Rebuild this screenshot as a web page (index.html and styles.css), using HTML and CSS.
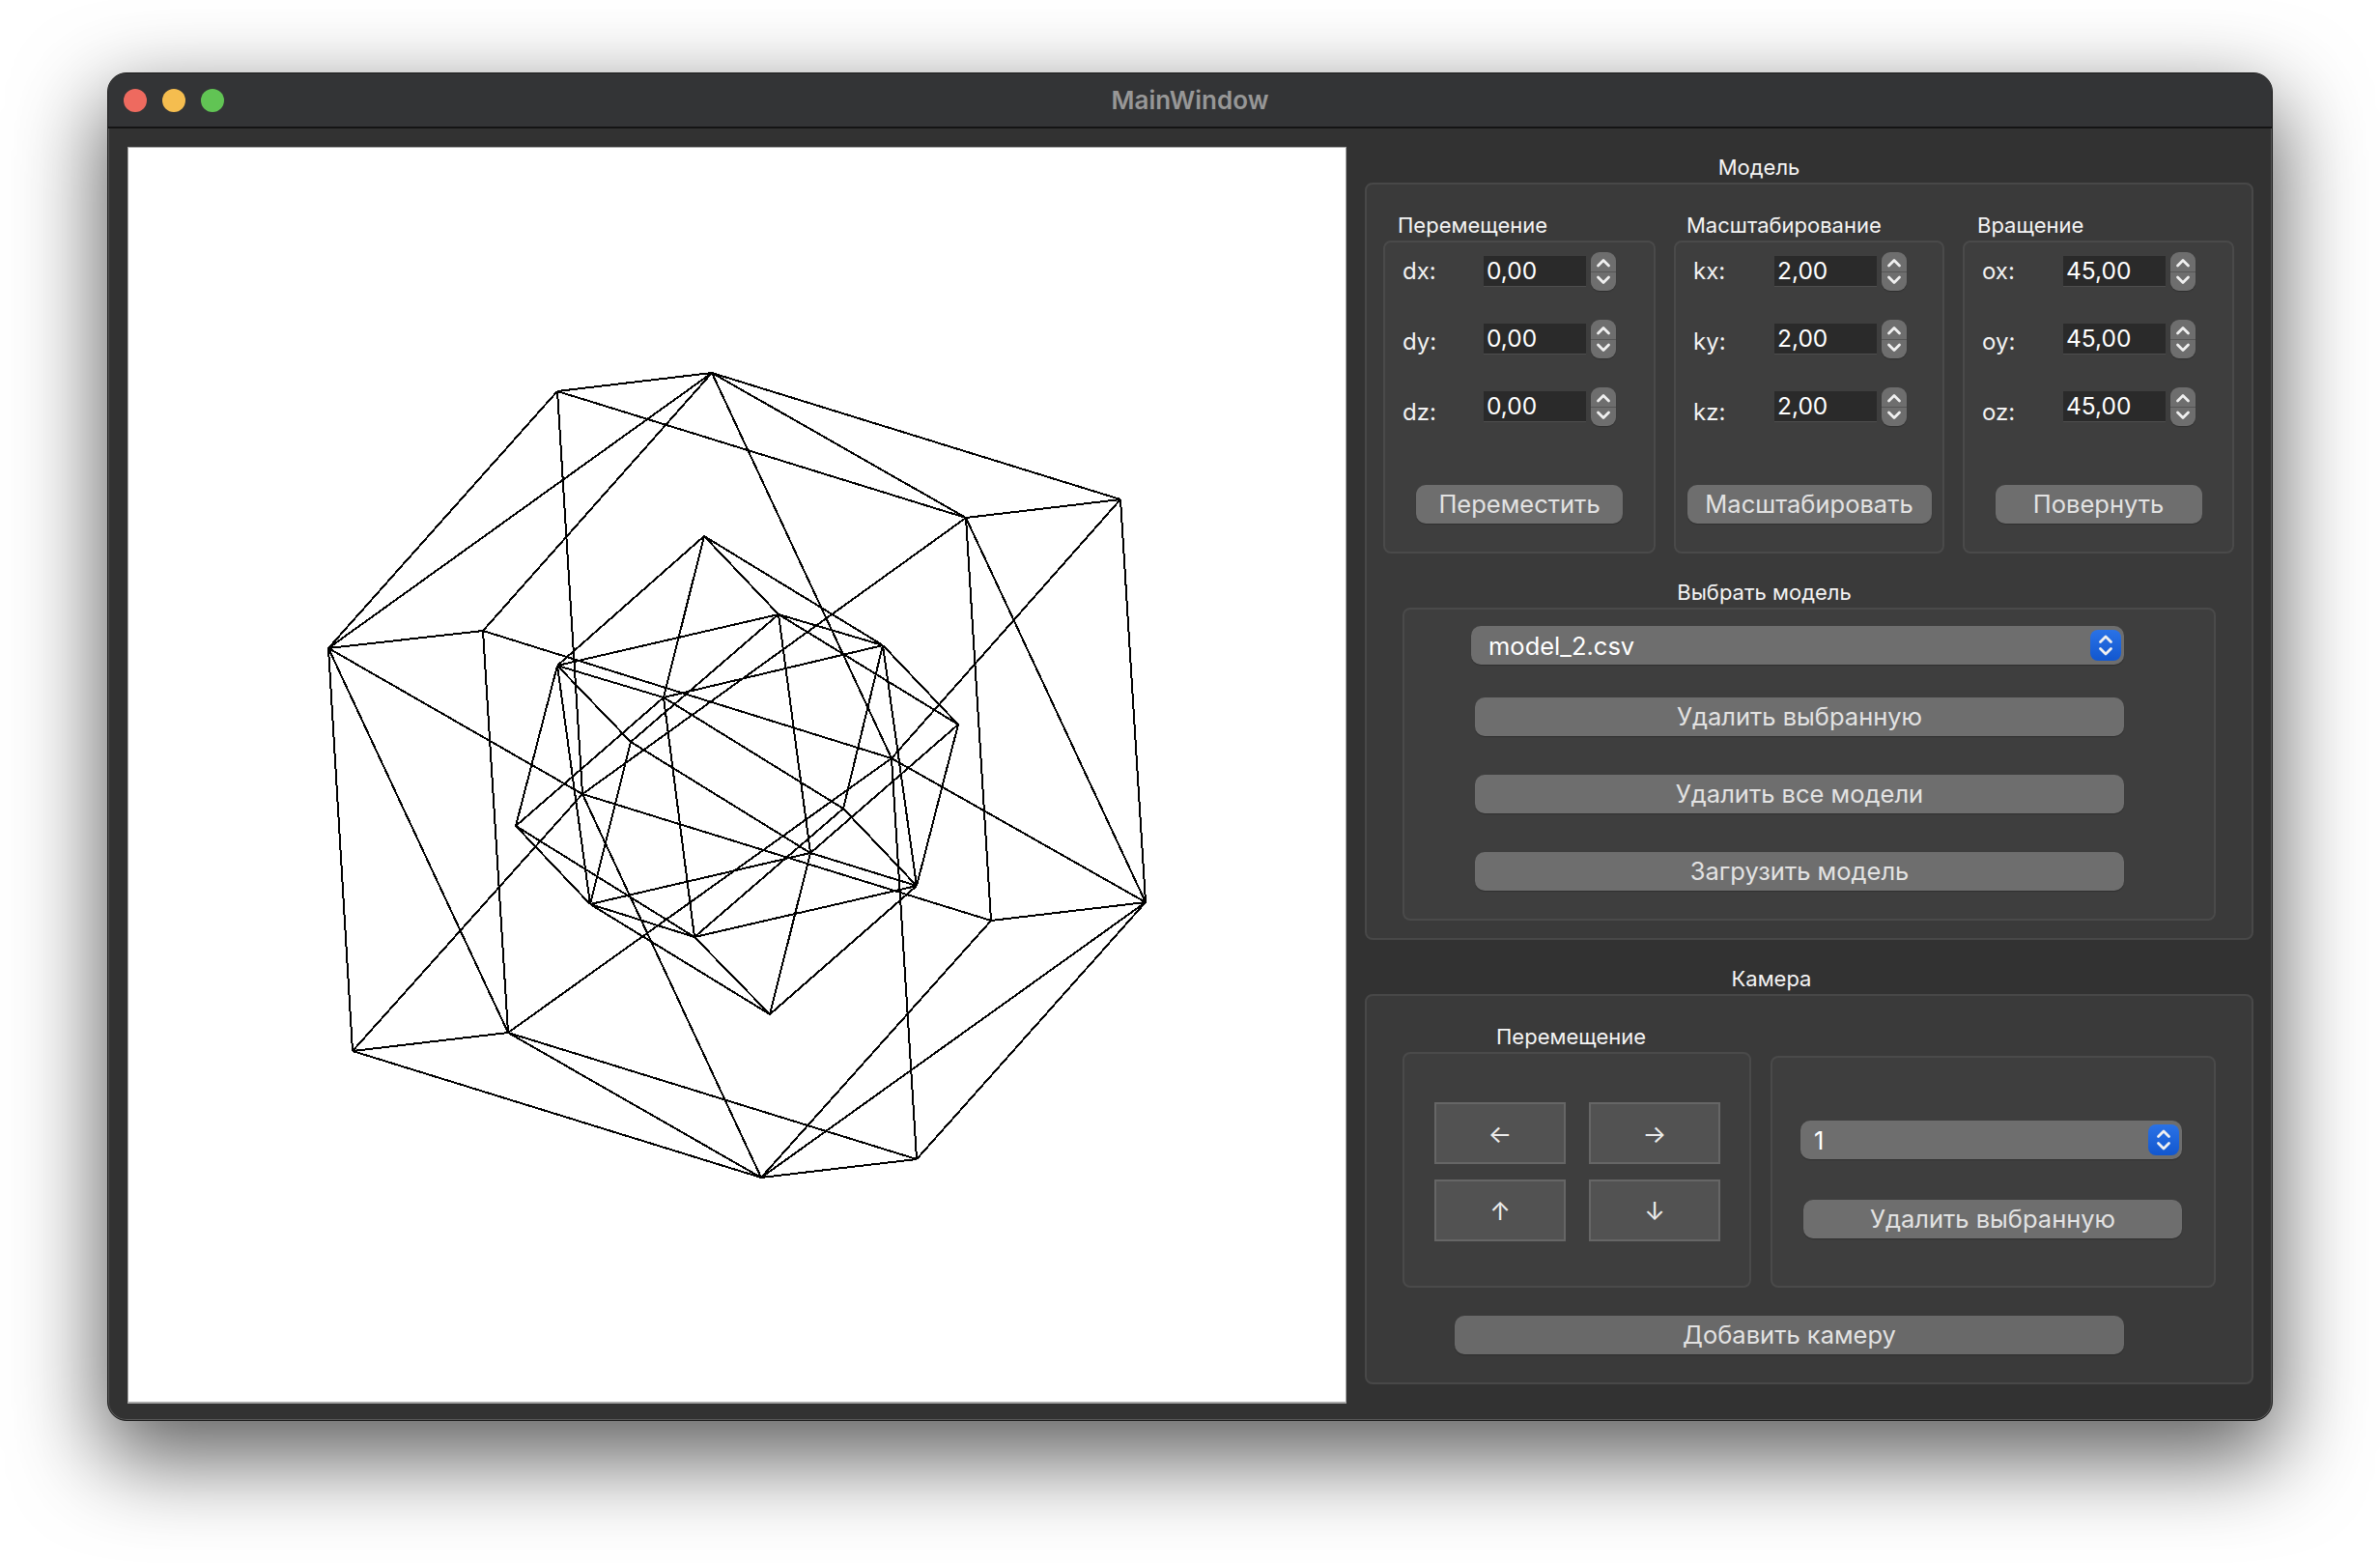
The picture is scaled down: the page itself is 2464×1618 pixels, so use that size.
FILE: index.html
```html
<!DOCTYPE html>
<html lang="ru">
<head>
    <meta charset="UTF-8">
    <title>MainWindow</title>
    <link rel="stylesheet" href="styles.css">
</head>
<body>

    <div class="window">

        <!-- Title bar -->
        <div class="titlebar">
            <div class="lights">
                <span class="light red"></span>
                <span class="light yellow"></span>
                <span class="light green"></span>
            </div>
            <div class="win-title">MainWindow</div>
        </div>

        <div class="main">

            <!-- Wireframe canvas -->
            <div class="canvas">
                <svg class="wire" viewBox="133 153 1260 1298">
                    <path d="M737 386L340 671M737 386L1000 536M737 386L923 785M340 671L526 1069M340 671L603 822M1000 536L1186 934M1000 536L603 822M526 1069L788 1219M526 1069L923 785M788 1219L1186 934M788 1219L603 822M1186 934L923 785
                             M577 405L737 386M577 405L340 671M577 405L1000 536M577 405L603 822
                             M500 653L737 386M500 653L340 671M500 653L526 1069M500 653L923 785
                             M1160 517L737 386M1160 517L1000 536M1160 517L1186 934M1160 517L923 785
                             M365 1088L340 671M365 1088L526 1069M365 1088L788 1219M365 1088L603 822
                             M949 1200L526 1069M949 1200L788 1219M949 1200L1186 934M949 1200L923 785
                             M1026 953L1000 536M1026 953L788 1219M1026 953L1186 934M1026 953L603 822"/>
                    <path d="M577 689L687 722M806 636L914 668M577 689L806 636M687 722L914 668M611 936L719 970M839 883L949 917M611 936L839 883M719 970L949 917M577 689L611 936M687 722L719 970M806 636L839 883M914 668L949 917
                             M729 555L577 689M729 555L687 722M729 555L806 636M729 555L914 668
                             M797 1050L611 936M797 1050L719 970M797 1050L839 883M797 1050L949 917
                             M992 750L806 636M992 750L914 668M992 750L839 883M992 750L949 917
                             M534 855L577 689M534 855L687 722M534 855L611 936M534 855L719 970
                             M873 837L687 722M873 837L914 668M873 837L719 970M873 837L949 917
                             M653 768L577 689M653 768L806 636M653 768L611 936M653 768L839 883"/>
                </svg>
            </div>

            <div class="side">

                <!-- Model -->
                <div class="group-title model-title">Модель</div>
                <div class="group">
                    <div class="transforms">

                        <div class="transform">
                            <div class="sub-title">Перемещение</div>
                            <div class="box">
                                <div class="form">
                                    <div class="labels">
                                        <span>dx:</span>
                                        <span>dy:</span>
                                        <span>dz:</span>
                                    </div>
                                    <div class="fields">
                                        <div class="field"><span class="input">0,00</span><span class="spin"><svg viewBox="0 0 26 40"><path d="M7.5 14L13 8.5L18.5 14M7.5 26L13 31.5L18.5 26"/></svg></span></div>
                                        <div class="field"><span class="input">0,00</span><span class="spin"><svg viewBox="0 0 26 40"><path d="M7.5 14L13 8.5L18.5 14M7.5 26L13 31.5L18.5 26"/></svg></span></div>
                                        <div class="field"><span class="input">0,00</span><span class="spin"><svg viewBox="0 0 26 40"><path d="M7.5 14L13 8.5L18.5 14M7.5 26L13 31.5L18.5 26"/></svg></span></div>
                                    </div>
                                </div>
                                <button class="btn apply">Переместить</button>
                            </div>
                        </div>

                        <div class="transform scale">
                            <div class="sub-title">Масштабирование</div>
                            <div class="box">
                                <div class="form">
                                    <div class="labels">
                                        <span>kx:</span>
                                        <span>ky:</span>
                                        <span>kz:</span>
                                    </div>
                                    <div class="fields">
                                        <div class="field"><span class="input">2,00</span><span class="spin"><svg viewBox="0 0 26 40"><path d="M7.5 14L13 8.5L18.5 14M7.5 26L13 31.5L18.5 26"/></svg></span></div>
                                        <div class="field"><span class="input">2,00</span><span class="spin"><svg viewBox="0 0 26 40"><path d="M7.5 14L13 8.5L18.5 14M7.5 26L13 31.5L18.5 26"/></svg></span></div>
                                        <div class="field"><span class="input">2,00</span><span class="spin"><svg viewBox="0 0 26 40"><path d="M7.5 14L13 8.5L18.5 14M7.5 26L13 31.5L18.5 26"/></svg></span></div>
                                    </div>
                                </div>
                                <button class="btn apply">Масштабировать</button>
                            </div>
                        </div>

                        <div class="transform">
                            <div class="sub-title">Вращение</div>
                            <div class="box">
                                <div class="form">
                                    <div class="labels">
                                        <span>ox:</span>
                                        <span>oy:</span>
                                        <span>oz:</span>
                                    </div>
                                    <div class="fields">
                                        <div class="field"><span class="input">45,00</span><span class="spin"><svg viewBox="0 0 26 40"><path d="M7.5 14L13 8.5L18.5 14M7.5 26L13 31.5L18.5 26"/></svg></span></div>
                                        <div class="field"><span class="input">45,00</span><span class="spin"><svg viewBox="0 0 26 40"><path d="M7.5 14L13 8.5L18.5 14M7.5 26L13 31.5L18.5 26"/></svg></span></div>
                                        <div class="field"><span class="input">45,00</span><span class="spin"><svg viewBox="0 0 26 40"><path d="M7.5 14L13 8.5L18.5 14M7.5 26L13 31.5L18.5 26"/></svg></span></div>
                                    </div>
                                </div>
                                <button class="btn apply">Повернуть</button>
                            </div>
                        </div>

                    </div>

                    <div class="group-title pick-title">Выбрать модель</div>
                    <div class="box pick">
                        <div class="combo">
                            <span>model_2.csv</span>
                            <span class="combo-arrows"><svg viewBox="0 0 32 32"><path d="M10.5 12.5L16 7L21.5 12.5M10.5 19.5L16 25L21.5 19.5"/></svg></span>
                        </div>
                        <button class="btn wide">Удалить выбранную</button>
                        <button class="btn wide">Удалить все модели</button>
                        <button class="btn wide">Загрузить модель</button>
                    </div>
                </div>

                <!-- Camera -->
                <div class="group-title camera-title">Камера</div>
                <div class="group camera">
                    <div class="camera-row">
                        <div class="camera-move">
                            <div class="sub-title">Перемещение</div>
                            <div class="box arrows-box">
                                <div class="arrows">
                                    <button class="arrow">←</button>
                                    <button class="arrow">→</button>
                                    <button class="arrow">↑</button>
                                    <button class="arrow">↓</button>
                                </div>
                            </div>
                        </div>
                        <div class="box camera-pick">
                            <div class="combo">
                                <span>1</span>
                                <span class="combo-arrows"><svg viewBox="0 0 32 32"><path d="M10.5 12.5L16 7L21.5 12.5M10.5 19.5L16 25L21.5 19.5"/></svg></span>
                            </div>
                            <button class="btn">Удалить выбранную</button>
                        </div>
                    </div>
                    <button class="btn add">Добавить камеру</button>
                </div>

            </div>
        </div>
    </div>

</body>
</html>
```

FILE: styles.css
```css
html, body {
    margin: 0;
    height: 100%;
    overflow: hidden;
    background: #fff;
}
body {
    padding: 75px 111px;
    box-sizing: border-box;
    font-family: Inter, "Noto Sans", sans-serif;
    color: #f2f2f2;
}
button {
    font-family: inherit;
    padding: 0;
    border: none;
    cursor: pointer;
}

/* Window */
.window {
    width: 2242px;
    height: 1396px;
    box-sizing: border-box;
    background: #323232;
    border-radius: 20px;
    border: 1px solid #1c1c1c;
    box-shadow: inset 0 0 0 1px #585858, 0 34px 90px 6px rgba(0, 0, 0, 0.62);
    overflow: hidden;
}
.titlebar {
    height: 57px;
    display: flex;
    align-items: center;
    position: relative;
    background: #333436;
    border-bottom: 2px solid #141414;
    box-sizing: border-box;
}
.lights {
    display: flex;
    gap: 16px;
    padding-left: 16px;
}
.light {
    width: 24px;
    height: 24px;
    border-radius: 50%;
}
.red { background: #ee6a5f; }
.yellow { background: #f5bd4f; }
.green { background: #61c454; }
.win-title {
    position: absolute;
    left: 0;
    right: 0;
    text-align: center;
    font-size: 26px;
    font-weight: 600;
    color: #979797;
}

/* Canvas */
.main {
    display: flex;
    padding-top: 19px;
    padding-left: 20px;
}
.canvas {
    width: 1262px;
    height: 1301px;
    box-sizing: border-box;
    background: #fff;
    border: 1px solid #a8a8a8;
    border-bottom-width: 2px;
    flex: none;
}
.wire {
    display: block;
    width: 1260px;
    height: 1298px;
}
.wire path {
    fill: none;
    stroke: #000;
    stroke-width: 2;
    shape-rendering: crispEdges;
}

/* Right side */
.side {
    margin-left: 19px;
    width: 920px;
    flex: none;
}
.group-title {
    font-size: 22px;
    line-height: 26px;
    height: 26px;
    text-align: center;
    color: #f4f4f4;
}
.model-title {
    margin-top: 8px;
    margin-bottom: 3px;
    padding-right: 104px;
}
.group {
    box-sizing: border-box;
    height: 784px;
    background: #3a3a3a;
    border: 2px solid #484848;
    border-radius: 8px;
    padding: 29px 18px 0 17px;
}
.box {
    box-sizing: border-box;
    background: #3e3e3e;
    border: 2px solid #4a4a4a;
    border-radius: 8px;
}

/* Move / scale / rotate */
.transforms {
    display: grid;
    grid-template-columns: 282px 280px 281px;
    column-gap: 19px;
}
.sub-title {
    font-size: 22px;
    line-height: 26px;
    height: 26px;
    padding-left: 15px;
    margin-bottom: 3px;
    color: #f4f4f4;
}
.scale .sub-title {
    padding-left: 13px;
}
.transform .box {
    height: 324px;
    padding-top: 10px;
    display: flex;
    flex-direction: column;
    align-items: center;
}
.form {
    display: grid;
    grid-template-columns: 84px auto;
    width: 100%;
    box-sizing: border-box;
    padding-left: 18px;
}
.labels {
    display: flex;
    flex-direction: column;
    font-size: 24px;
    padding-top: 2px;
}
.labels span {
    height: 73px;
    line-height: 36px;
}
.fields {
    display: flex;
    flex-direction: column;
    gap: 30px;
}
.field {
    display: flex;
    align-items: center;
    gap: 5px;
    height: 40px;
}
.input {
    box-sizing: border-box;
    width: 106px;
    height: 32px;
    padding-left: 3px;
    background: #2a2a2a;
    border-bottom: 1px solid #4e4e4e;
    font-size: 24.5px;
    line-height: 30px;
    color: #fff;
}
.spin {
    width: 26px;
    height: 40px;
    border-radius: 9px;
    background: linear-gradient(#6e6e6e 49%, #565656 49%, #565656 52%, #6e6e6e 52%);
    box-shadow: 0 1px 1px rgba(0, 0, 0, 0.25);
}
.spin svg {
    display: block;
    width: 26px;
    height: 40px;
}
.spin path, .combo-arrows path {
    fill: none;
    stroke: #f0f0f0;
    stroke-width: 2.8;
    stroke-linecap: round;
    stroke-linejoin: round;
}
.btn {
    box-sizing: border-box;
    height: 40px;
    flex: none;
    padding-bottom: 2px;
    background: #6e6e6e;
    color: #e2e2e2;
    font-size: 25.5px;
    border-radius: 10px;
    box-shadow: 0 1px 1px rgba(0, 0, 0, 0.25);
}
.apply {
    width: 214px;
    margin-top: 20px;
}
.scale .apply {
    width: 253px;
}

/* Model picker */
.pick-title {
    margin-top: 27px;
    margin-bottom: 3px;
    padding-right: 92px;
}
.pick {
    height: 324px;
    margin-left: 20px;
    width: 842px;
    padding: 17px 0 0 69px;
    display: flex;
    flex-direction: column;
}
.combo {
    box-sizing: border-box;
    height: 40px;
    flex: none;
    background: #6e6e6e;
    border-radius: 10px;
    display: flex;
    align-items: center;
    justify-content: space-between;
    padding: 0 3px 0 18px;
    font-size: 25.5px;
    color: #fff;
    box-shadow: 0 1px 1px rgba(0, 0, 0, 0.25);
}
.pick .combo {
    width: 676px;
    margin-bottom: 34px;
}
.combo-arrows {
    width: 32px;
    height: 32px;
    border-radius: 8px;
    background: linear-gradient(#2a72e6, #1257cf);
}
.combo-arrows svg {
    display: block;
    width: 32px;
    height: 32px;
}
.wide {
    width: 672px;
    margin-left: 4px;
    margin-bottom: 40px;
}

/* Camera */
.camera-title {
    margin-top: 27px;
    margin-bottom: 3px;
    padding-right: 78px;
}
.camera {
    height: 404px;
    padding-top: 29px;
}
.camera-row {
    display: flex;
    align-items: flex-end;
    gap: 20px;
    padding-left: 20px;
}
.camera-move .sub-title {
    padding-left: 97px;
}
.arrows-box {
    width: 361px;
    height: 244px;
    padding: 50px 0 0 31px;
}
.arrows {
    display: grid;
    grid-template-columns: 136px 136px;
    grid-auto-rows: 64px;
    gap: 16px 24px;
}
.arrow {
    background: #525252;
    border: 2px solid #666;
    color: #ececec;
    font-size: 26px;
}
.camera-pick {
    width: 461px;
    height: 240px;
    padding: 65px 0 0 29px;
    display: flex;
    flex-direction: column;
}
.camera-pick .combo {
    width: 395px;
    margin-bottom: 42px;
    padding-left: 14px;
}
.camera-pick .btn {
    width: 392px;
    margin-left: 3px;
}
.add {
    display: block;
    width: 693px;
    margin: 29px 0 0 74px;
    background: #696969;
}
```
